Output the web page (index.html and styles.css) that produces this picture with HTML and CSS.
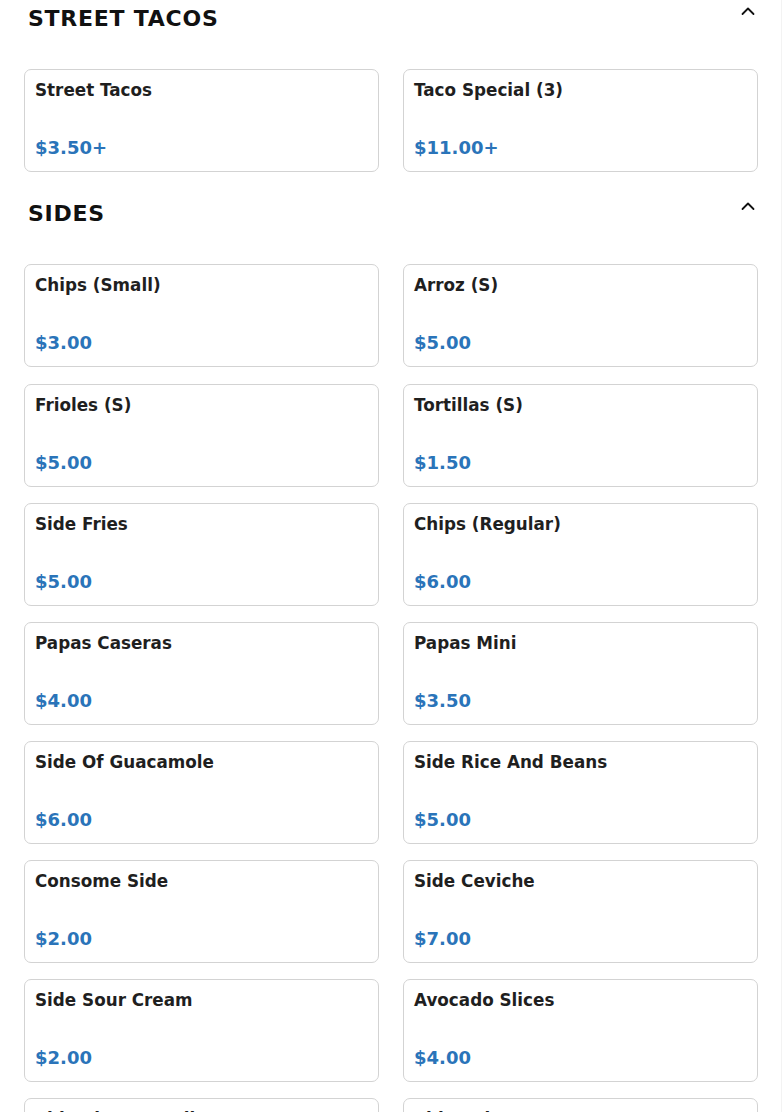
FILE: index.html
```html
<!DOCTYPE html>
<html lang="en">
<head>
<meta charset="utf-8">
<title>Menu</title>
<link rel="stylesheet" href="styles.css">
</head>
<body>
<div class="page">
  <section class="section">
    <div class="section-header">
      <h2 class="section-title">STREET TACOS</h2>
      <svg class="chevron" width="16" height="10" viewBox="0 0 16 10"><path d="M2.5 8 L8 2.5 L13.5 8" fill="none" stroke="#111" stroke-width="1.8" stroke-linecap="round" stroke-linejoin="round"/></svg>
    </div>
    <div class="grid">
      <div class="card"><div class="item-name">Street Tacos</div><div class="item-price">$3.50+</div></div>
      <div class="card"><div class="item-name">Taco Special (3)</div><div class="item-price">$11.00+</div></div>
    </div>
  </section>
  <section class="section">
    <div class="section-header">
      <h2 class="section-title">SIDES</h2>
      <svg class="chevron" width="16" height="10" viewBox="0 0 16 10"><path d="M2.5 8 L8 2.5 L13.5 8" fill="none" stroke="#111" stroke-width="1.8" stroke-linecap="round" stroke-linejoin="round"/></svg>
    </div>
    <div class="grid">
      <div class="card"><div class="item-name">Chips (Small)</div><div class="item-price">$3.00</div></div>
      <div class="card"><div class="item-name">Arroz (S)</div><div class="item-price">$5.00</div></div>
      <div class="card"><div class="item-name">Frioles (S)</div><div class="item-price">$5.00</div></div>
      <div class="card"><div class="item-name">Tortillas (S)</div><div class="item-price">$1.50</div></div>
      <div class="card"><div class="item-name">Side Fries</div><div class="item-price">$5.00</div></div>
      <div class="card"><div class="item-name">Chips (Regular)</div><div class="item-price">$6.00</div></div>
      <div class="card"><div class="item-name">Papas Caseras</div><div class="item-price">$4.00</div></div>
      <div class="card"><div class="item-name">Papas Mini</div><div class="item-price">$3.50</div></div>
      <div class="card"><div class="item-name">Side Of Guacamole</div><div class="item-price">$6.00</div></div>
      <div class="card"><div class="item-name">Side Rice And Beans</div><div class="item-price">$5.00</div></div>
      <div class="card"><div class="item-name">Consome Side</div><div class="item-price">$2.00</div></div>
      <div class="card"><div class="item-name">Side Ceviche</div><div class="item-price">$7.00</div></div>
      <div class="card"><div class="item-name">Side Sour Cream</div><div class="item-price">$2.00</div></div>
      <div class="card"><div class="item-name">Avocado Slices</div><div class="item-price">$4.00</div></div>
      <div class="card"><div class="item-name">Side Pico De Gallo</div><div class="item-price">$2.00</div></div>
      <div class="card"><div class="item-name">Side Salsa</div><div class="item-price">$1.00</div></div>
    </div>
  </section>
</div>
</body>
</html>
```

FILE: styles.css
```css
html, body {
  margin: 0;
  padding: 0;
  background: #ffffff;
}

body {
  font-family: "DejaVu Sans", "Noto Sans", sans-serif;
  color: #1c1c1c;
}

.page {
  box-sizing: border-box;
  width: 782px;
  min-height: 1112px;
  border-right: 1px solid #f3f3f3;
}

.section {
  padding-top: 6px;
  margin-bottom: 23.5px;
}

.section-header {
  display: flex;
  justify-content: space-between;
  align-items: flex-start;
  padding: 0 25px 0 28px;
}

.section-title {
  margin: 0;
  font-size: 22px;
  line-height: 26.4px;
  font-weight: 700;
  letter-spacing: 0.75px;
  color: #111111;
}

.chevron {
  display: block;
  margin-top: 0;
}

.grid {
  display: grid;
  grid-template-columns: 355px 355px;
  column-gap: 24px;
  row-gap: 16.1px;
  padding: 0 23px 0 24px;
  margin-top: 36.6px;
}

.card {
  box-sizing: border-box;
  border: 1px solid #d3d3d3;
  border-radius: 7px;
  padding: 10px 10px 12.4px 10px;
  background: #ffffff;
}

.item-name {
  font-size: 16.8px;
  line-height: 20.4px;
  font-weight: 700;
  color: #1f1f1f;
}

.item-price {
  margin-top: 36.6px;
  font-size: 18px;
  line-height: 21.6px;
  font-weight: 700;
  color: #2a74b9;
}
```
